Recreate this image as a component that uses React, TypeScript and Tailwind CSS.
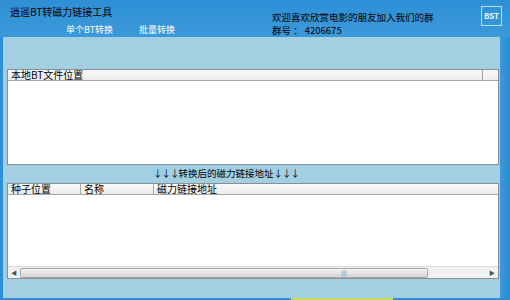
import React from "react";

const FONT = "font-['SimSun','Noto_Sans_CJK_SC',sans-serif]";

function HeaderCell({ w, label, last }: { w?: string; label: string; last?: boolean }) {
  return (
    <div
      className={`${w ?? "flex-1"} h-full flex items-center pl-[3px] border-r ${last ? "border-r-0" : "border-[#a5a5a5]"} bg-gradient-to-b from-[#fafafa] to-[#ececec]`}
    >
      <span className="text-[10px] leading-none text-black">{label}</span>
    </div>
  );
}

export default function App() {
  return (
    <div className={`w-[510px] h-[300px] flex flex-col overflow-hidden ${FONT}`}>
      {/* title bar */}
      <div className="h-[37px] shrink-0 flex bg-gradient-to-b from-[#2f8fd6] to-[#3a9ad9] relative">
        <div className="w-[272px] pl-[10px] pt-[6px]">
          <div className="text-[10px] leading-[12px] text-black">逍遥BT转磁力链接工具</div>
          <div className="flex mt-[6px] pl-[56px] gap-[26px] text-[9px] leading-[12px] text-white">
            <span>单个BT转换</span>
            <span>批量转换</span>
          </div>
        </div>
        <div className="pt-[10px] text-[9.5px] leading-[14px] text-black">
          <div>欢迎喜欢欣赏电影的朋友加入我们的群</div>
          <div className="-mt-[1px]">群号 ： 4206675</div>
        </div>
        <div className="absolute right-[8px] top-[6px] w-[21px] h-[20px] border border-[#b9e0f5] flex items-center justify-center text-[8px] font-bold text-[#e6f4fc]">
          BST
        </div>
      </div>

      {/* body */}
      <div className="flex-1 flex bg-[#a3cfe3]">
        <div className="w-[3px] bg-[#2e8fd7]" />
        <div className="flex-1 flex flex-col pl-[4px] pt-[32px]">
          {/* top table */}
          <div className="h-[96px] bg-white border border-[#8a8f96] flex flex-col">
            <div className="h-[11px] flex border-b border-[#a5a5a5]">
              <HeaderCell label="本地BT文件位置" />
              <HeaderCell w="w-[15px]" label="" last />
            </div>
          </div>

          <div className="h-[18px] flex items-center pl-[146px] text-[9.5px] leading-none text-black">
            <span className="tracking-[-1px]">↓↓↓</span>
            <span>转换后的磁力链接地址</span>
            <span className="tracking-[-1px]">↓↓↓</span>
          </div>

          {/* bottom table */}
          <div className="h-[96px] bg-white border border-[#8a8f96] flex flex-col">
            <div className="h-[11px] flex border-b border-[#a5a5a5]">
              <HeaderCell w="w-[73px]" label="种子位置" />
              <HeaderCell w="w-[73px]" label="名称" />
              <HeaderCell label="磁力链接地址" last />
            </div>
            <div className="flex-1" />
            <div className="h-[12px] flex items-center bg-[#f0f0f0] border-t border-[#dcdcdc]">
              <div className="w-[12px] flex justify-center text-[6px] text-[#505050]">◀</div>
              <div className="w-[408px] h-[10px] rounded-[2px] border border-[#a8a8a8] bg-gradient-to-b from-[#f2f2f2] to-[#d6d6d6] flex items-center justify-end pr-[80px]">
                <span className="text-[6px] leading-none text-[#7a7a7a] font-['DejaVu_Sans',sans-serif]">|||</span>
              </div>
              <div className="flex-1" />
              <div className="w-[12px] flex justify-center text-[6px] text-[#505050]">▶</div>
            </div>
          </div>
          <div className="flex-1" />
        </div>
        <div className="w-[1px]" />
        <div className="w-[10px] bg-gradient-to-r from-[#3b9ad9] to-[#2a8bd4]" />
      </div>
      <div className="h-[2px] shrink-0 flex bg-[#2e8fd7]">
        <div className="w-[291px]" />
        <div className="w-[102px] bg-[#c9de4a]" />
      </div>
    </div>
  );
}
